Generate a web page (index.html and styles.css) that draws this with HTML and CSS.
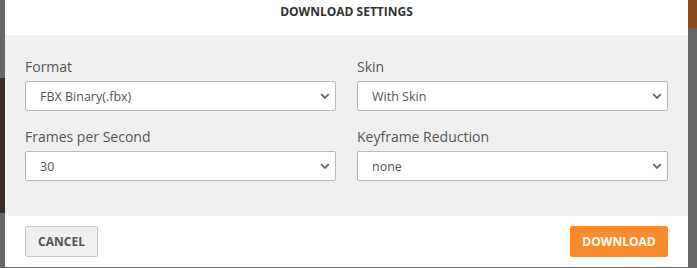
FILE: index.html
```html
<!DOCTYPE html>
<html lang="en">
<head>
  <meta charset="UTF-8" />
  <meta name="viewport" content="width=device-width, initial-scale=1.0"/>
  <title>Download Settings</title>
  <link rel="stylesheet" href="styles.css">
</head>
<body>

  <div class="backdrop">
    <div class="bg-left"></div>
    <div class="bg-right"></div>
  </div>

  <div class="modal">
    <div class="modal-header">
      <h2 class="modal-title">Download Settings</h2>
    </div>

    <div class="modal-body">
      <div class="field">
        <label class="field-label">Format</label>
        <div class="select-wrap">
          <select class="select">
            <option>FBX Binary(.fbx)</option>
          </select>
          <svg class="chevron" width="10" height="7" viewBox="0 0 10 7"><path d="M1.2 1.2 L5 5 L8.8 1.2" fill="none" stroke="#666" stroke-width="1.8"/></svg>
        </div>
      </div>
      <div class="field">
        <label class="field-label">Skin</label>
        <div class="select-wrap">
          <select class="select">
            <option>With Skin</option>
          </select>
          <svg class="chevron" width="10" height="7" viewBox="0 0 10 7"><path d="M1.2 1.2 L5 5 L8.8 1.2" fill="none" stroke="#666" stroke-width="1.8"/></svg>
        </div>
      </div>
      <div class="field">
        <label class="field-label">Frames per Second</label>
        <div class="select-wrap">
          <select class="select">
            <option>30</option>
          </select>
          <svg class="chevron" width="10" height="7" viewBox="0 0 10 7"><path d="M1.2 1.2 L5 5 L8.8 1.2" fill="none" stroke="#666" stroke-width="1.8"/></svg>
        </div>
      </div>
      <div class="field">
        <label class="field-label">Keyframe Reduction</label>
        <div class="select-wrap">
          <select class="select">
            <option>none</option>
          </select>
          <svg class="chevron" width="10" height="7" viewBox="0 0 10 7"><path d="M1.2 1.2 L5 5 L8.8 1.2" fill="none" stroke="#666" stroke-width="1.8"/></svg>
        </div>
      </div>
    </div>

    <div class="modal-footer">
      <button class="btn btn-cancel">Cancel</button>
      <button class="btn btn-download">Download</button>
    </div>
  </div>

</body>
</html>
```

FILE: styles.css
```css
body {
  font-family: "Open Sans", "Noto Sans", sans-serif;
  background-color: #666;
  margin: 0;
  padding: 0;
  width: 697px;
  height: 268px;
  overflow: hidden;
  position: relative;
}

.backdrop {
  position: absolute;
  top: 0;
  left: 0;
  width: 100%;
  height: 100%;
}

.bg-left {
  position: absolute;
  left: 0;
  top: 78px;
  width: 5px;
  height: 135px;
  background-color: #3c2a28;
}

.bg-right {
  position: absolute;
  right: 0;
  top: 0;
  width: 9px;
  height: 28px;
  background-color: #8a4a1c;
}

.modal {
  position: relative;
  margin-left: 5px;
  width: 683px;
  background-color: #fff;
}

.modal-header {
  height: 35px;
  padding-top: 3px;
  box-sizing: border-box;
  text-align: center;
}

.modal-title {
  margin: 0;
  font-size: 12px;
  font-weight: bold;
  text-transform: uppercase;
  color: #333;
  line-height: 18px;
}

.modal-body {
  background-color: #f0f0f0;
  padding: 22px 20px 35px;
  display: grid;
  grid-template-columns: 1fr 1fr;
  column-gap: 21px;
  row-gap: 16px;
}

.field {
  display: flex;
  flex-direction: column;
}

.field-label {
  font-size: 14px;
  line-height: 20px;
  color: #555;
  margin-bottom: 4px;
}

.select-wrap {
  position: relative;
}

.select {
  appearance: none;
  -webkit-appearance: none;
  width: 100%;
  height: 30px;
  box-sizing: border-box;
  border: 1px solid #b8b8b8;
  border-radius: 2px;
  background-color: #fff;
  padding: 0 14px;
  font-family: inherit;
  font-size: 12.5px;
  color: #555;
}

.chevron {
  position: absolute;
  right: 6px;
  top: 12px;
  pointer-events: none;
}

.modal-footer {
  display: flex;
  justify-content: space-between;
  padding: 10px 20px;
  height: 51px;
  box-sizing: border-box;
}

.btn {
  height: 31px;
  font-family: inherit;
  font-size: 12px;
  font-weight: bold;
  text-transform: uppercase;
  border-radius: 2px;
  cursor: pointer;
}

.btn-cancel {
  width: 73px;
  background-color: #f0f0f0;
  border: 1px solid #c8c8c8;
  color: #555;
}

.btn-download {
  width: 98px;
  background-color: #fd8a2a;
  border: none;
  color: #fff;
}
```
